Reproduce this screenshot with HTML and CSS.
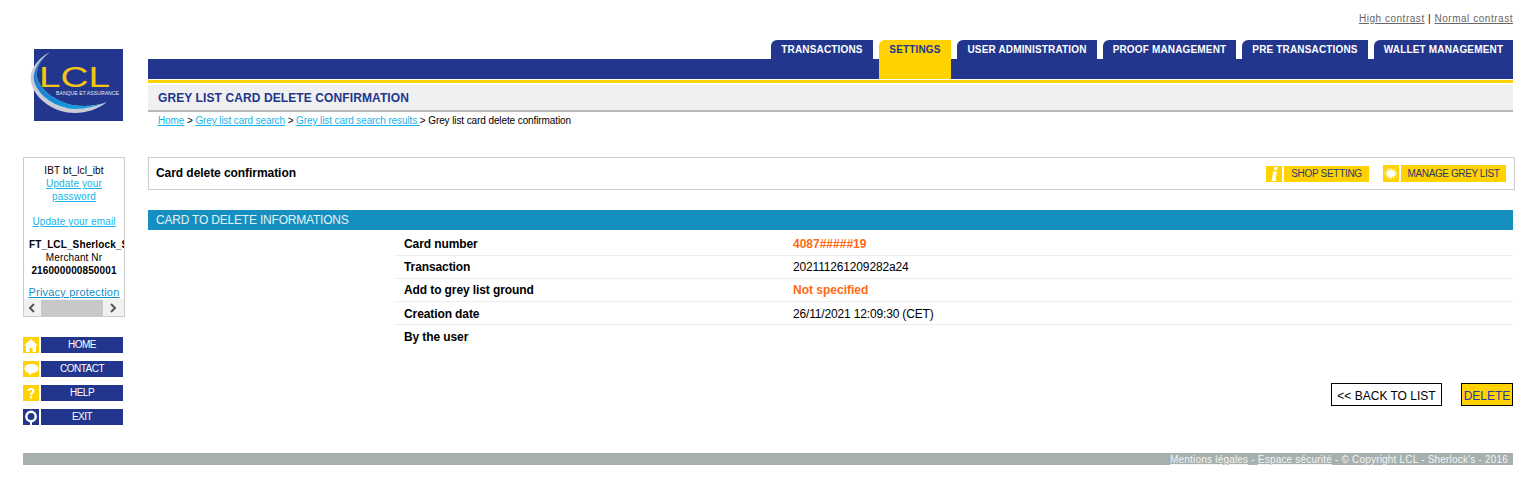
FILE: index.html
```html
<!DOCTYPE html>
<html lang="en">
<head>
<meta charset="utf-8">
<title>Grey list card delete confirmation</title>
<link rel="stylesheet" href="styles.css">
</head>
<body>
<div class="page">
  <div class="contrast"><a href="#">High contrast</a> <span class="sep">|</span> <a href="#">Normal contrast</a></div>
  <div class="layout">
    <aside class="side">
      <svg class="logo" width="98" height="76" viewBox="26 47 98 76">
        <defs>
          <linearGradient id="sw" x1="0" y1="0" x2="1" y2="1">
            <stop offset="0" stop-color="#3a6fc4"/><stop offset=".6" stop-color="#0f8fd8"/><stop offset="1" stop-color="#27a7e6"/>
          </linearGradient>
        </defs>
        <rect x="34" y="49" width="89" height="72" fill="#21368c"/>
        <path d="M50 52C38 58 29 70 31 82C35 100 55 113 75 113C87 113 98 109 107 102C97 106 84 107 72 105C55 101 40 90 37 77C36 68 40 60 50 52Z" fill="#c9ccd6"/>
        <path d="M50 52C40 59 32 70 34 81C38 96 56 108 75 109C86 109 97 106 107 102C97 106 84 107 72 105C55 101 40 90 37 77C36 68 40 60 50 52Z" fill="url(#sw)"/>
        <text class="logo-mark" x="39" y="87" textLength="71" lengthAdjust="spacingAndGlyphs">LCL</text>
        <text class="logo-sub" x="56" y="94.500" textLength="63" lengthAdjust="spacingAndGlyphs">BANQUE ET ASSURANCE</text>
      </svg>
      <div class="account">
        <div class="account-body">
          <p class="line">IBT bt_lcl_ibt</p>
          <p class="line"><a href="#">Update your<br>password</a></p>
          <p class="line email"><a href="#">Update your email</a></p>
          <p class="line merchant"><b>FT_LCL_Sherlock_Shop</b></p>
          <p class="line">Merchant Nr</p>
          <p class="line"><b>216000000850001</b></p>
          <p class="privacy"><a href="#">Privacy protection</a></p>
        </div>
        <div class="scrollbar">
          <svg class="arrow" width="8" height="10" viewBox="0 0 8 10"><path d="M6 1L2 5L6 9" fill="none" stroke="#555" stroke-width="2"/></svg>
          <span class="thumb"></span>
          <svg class="arrow" width="8" height="10" viewBox="0 0 8 10"><path d="M2 1L6 5L2 9" fill="none" stroke="#555" stroke-width="2"/></svg>
        </div>
      </div>
      <nav class="menu">
        <a class="menu-item" href="#">
          <span class="menu-icon"><svg width="16" height="16" viewBox="0 0 16 16"><path d="M8 2L15 8.500L13 8.500V15H9.500V11H6.500V15H3V8.500H1Z" fill="#fff"/></svg></span>
          <span class="menu-label">HOME</span>
        </a>
        <a class="menu-item" href="#">
          <span class="menu-icon"><svg width="16" height="16" viewBox="0 0 16 16"><path d="M8.500 3C12.500 3 15.500 4.800 15.500 7.500C15.500 10.200 12.500 12 9 12L6 15L6 12C3 11.500 1.500 9.800 1.500 7.500C1.500 4.800 4.500 3 8.500 3Z" fill="#fff"/></svg></span>
          <span class="menu-label">CONTACT</span>
        </a>
        <a class="menu-item" href="#">
          <span class="menu-icon"><svg width="16" height="16" viewBox="0 0 16 16"><path d="M4.500 6C4.500 4 6 3 8 3C10.200 3 11.500 4.200 11.500 5.900C11.500 8 9 8.200 9 10H7C7 7.500 9.200 7.200 9.200 5.900C9.200 5.200 8.700 4.900 8 4.900C7.200 4.900 6.800 5.300 6.800 6Z M7 11H9V13.500H7Z" fill="#fff"/></svg></span>
          <span class="menu-label">HELP</span>
        </a>
        <a class="menu-item" href="#">
          <span class="menu-icon exit"><svg width="16" height="16" viewBox="0 0 16 16"><circle cx="8" cy="7.500" r="4.700" fill="none" stroke="#fff" stroke-width="2.400"/><path d="M7 11H9V16H7Z" fill="#fff"/></svg></span>
          <span class="menu-label">EXIT</span>
        </a>
      </nav>
    </aside>
    <main class="main">
      <div class="tabs">
        <a class="tab" href="#">TRANSACTIONS</a>
        <a class="tab active" href="#">SETTINGS</a>
        <a class="tab" href="#">USER ADMINISTRATION</a>
        <a class="tab" href="#">PROOF MANAGEMENT</a>
        <a class="tab" href="#">PRE TRANSACTIONS</a>
        <a class="tab" href="#">WALLET MANAGEMENT</a>
      </div>
      <div class="rule"></div>
      <h1 class="page-title">GREY LIST CARD DELETE CONFIRMATION</h1>
      <div class="crumbs"><a href="#">Home</a> &gt; <a href="#">Grey list card search</a> &gt; <a href="#">Grey list card search results </a> &gt; Grey list card delete confirmation</div>
      <section class="card">
        <h2 class="card-title">Card delete confirmation</h2>
        <div class="actions">
          <a class="action" href="#">
            <span class="action-icon"><svg width="16" height="16" viewBox="0 0 16 16"><path d="M8.500 1H11.500L11 4H8Z M7.500 5.500H11L9.500 13.500H10.500L10 15H5.500L7 7H6.500Z" fill="#fff"/></svg></span>
            <span class="action-label shop">SHOP SETTING</span>
          </a>
          <a class="action manage" href="#">
            <span class="action-icon tall"><svg width="16" height="17" viewBox="0 0 16 17"><path d="M8 1.500L9 6L11.500 2.500L10.800 6.600L14.500 5L11.500 7.800L15.500 8.500L11.500 9.500L14.500 12L10.800 10.800L11.500 14.500L9 11.200L8 15.500L7 11.200L4.500 14.500L5.200 10.800L1.500 12L4.500 9.500L.5 8.500L4.500 7.800L1.500 5L5.200 6.600L4.500 2.500L7 6Z" fill="#fff"/></svg></span>
            <span class="action-label tall">MANAGE GREY LIST</span>
          </a>
        </div>
      </section>
      <h2 class="band">CARD TO DELETE INFORMATIONS</h2>
      <dl class="details">
        <div class="row"><dt>Card number</dt><dd class="alert">4087#####19</dd></div>
        <div class="row"><dt>Transaction</dt><dd>202111261209282a24</dd></div>
        <div class="row"><dt>Add to grey list ground</dt><dd class="alert">Not specified</dd></div>
        <div class="row low"><dt>Creation date</dt><dd>26/11/2021 12:09:30 (CET)</dd></div>
        <div class="row low last"><dt>By the user</dt><dd></dd></div>
      </dl>
      <div class="buttons">
        <a class="btn" href="#">&lt;&lt; BACK TO LIST</a>
        <a class="btn primary" href="#">DELETE</a>
      </div>
    </main>
  </div>
  <footer class="footer"><a href="#">Mentions légales</a> - <a href="#">Espace sécurité</a> - © Copyright LCL - Sherlock's - 2016</footer>
</div>
</body>
</html>
```
FILE: styles.css
```css
* { box-sizing: border-box; }
html, body { margin: 0; padding: 0; background: #fff; }
body { font-family: "Liberation Sans", Arial, sans-serif; font-size: 10px; color: #000; overflow: hidden; }
a { color: inherit; }
p, h1, h2, dl, dd { margin: 0; }

.page { width: 1536px; padding: 0 23px; }

.contrast { height: 40px; padding-top: 12px; text-align: right; font-size: 10px; line-height: 13px; letter-spacing: .53px; color: #666; }
.contrast .sep { color: #000; }

.layout { display: flex; }
.side { width: 102px; margin-right: 23px; flex: none; }
.main { width: 1365px; flex: none; }

.logo { display: block; margin: 7px 0 0 3px; }
.logo-mark { font-family: "Liberation Sans", Arial, sans-serif; font-size: 29px; fill: #f3c614; }
.logo-sub { font-family: "Liberation Sans", Arial, sans-serif; font-size: 5px; fill: #e4e8f5; }

.account { margin-top: 34px; height: 160px; border: 1px solid #ccc; display: flex; flex-direction: column; overflow: hidden; }
.account-body { flex: 1; padding-top: 6px; text-align: center; white-space: nowrap; overflow: hidden; }
.line { line-height: 13px; letter-spacing: .12px; }
.line a { color: #16b4ea; }
.email { margin-top: 12px; }
.merchant { margin-top: 10px; text-align: left; padding-left: 5px; }
.privacy { margin-top: 9px; font-size: 11px; line-height: 13px; letter-spacing: .2px; color: #1590c4; }
.scrollbar { height: 17px; flex: none; background: #f1f1f1; display: flex; align-items: center; }
.arrow { margin: 0 5px 0 4px; flex: none; }
.thumb { width: 62px; height: 16px; background: #c8c8c8; flex: none; margin-right: 2px; }

.menu { margin-top: 20px; display: flex; flex-direction: column; gap: 8px; }
.menu-item { display: flex; height: 16px; text-decoration: none; }
.menu-icon { width: 16px; height: 16px; background: #ffd200; flex: none; margin-right: 2px; }
.menu-icon svg { display: block; }
.menu-icon.exit { background: #21368c; }
.menu-label { width: 82px; background: #21368c; color: #fff; font-size: 10px; line-height: 16px; text-align: center; letter-spacing: -.5px; }

.tabs { height: 39px; display: flex; justify-content: flex-end; gap: 6px; background: linear-gradient(transparent 19px, #21368c 19px); }
.tab { height: 19px; padding-top: 4px; text-align: center; background: #21368c; color: #fff; border-top-left-radius: 6px; font-size: 10px; font-weight: bold; line-height: 12px; text-decoration: none; white-space: nowrap; letter-spacing: .16px; }
.tab:nth-child(1) { width: 102px; }
.tab:nth-child(2) { width: 72px; }
.tab:nth-child(3) { width: 140px; }
.tab:nth-child(4) { width: 133px; }
.tab:nth-child(5) { width: 126px; }
.tab:nth-child(6) { width: 139px; }
.tab.active { height: 39px; background: #ffd200; color: #21368c; }

.rule { height: 6px; border-top: 1px solid #fff; border-bottom: 2px solid #fff; background: #ffd200; }
.page-title { height: 27px; background: #f0f0f0; border-bottom: 2px solid #b8b8b8; padding-left: 10px; color: #21368c; font-size: 12px; font-weight: bold; line-height: 26px; letter-spacing: .1px; }

.crumbs { padding: 2px 0 0 10px; height: 45px; line-height: 13px; font-size: 10px; letter-spacing: -.1px; }
.crumbs a { color: #16b4ea; }

.card { width: 1367px; height: 33px; border: 1px solid #ccc; display: flex; align-items: center; justify-content: space-between; padding: 0 8px 0 7px; }
.card-title { font-size: 12px; font-weight: bold; line-height: 14px; margin-top: -2px; letter-spacing: -.06px; }
.actions { display: flex; align-items: center; gap: 14px; }
.action { display: flex; text-decoration: none; }
.action-icon { width: 16px; height: 16px; margin: 1px 2px 0 0; background: #ffd200; flex: none; }
.action-icon.tall { height: 17px; margin-top: 0; }
.action-icon svg { display: block; }
.action-label { height: 16px; margin-top: 1px; background: #ffd200; color: #2b3a6e; font-size: 10px; line-height: 16px; text-align: center; letter-spacing: -.3px; }
.action-label.shop { width: 85px; }
.action-label.tall { width: 105px; height: 17px; margin-top: 0; line-height: 18px; letter-spacing: -.4px; }

.band { margin: 20px 0 3px; height: 20px; background: #158fbf; color: #e4f1f7; font-size: 12px; font-weight: normal; line-height: 21px; padding-left: 8px; letter-spacing: -.2px; }

.details { margin-left: 246px; }
.row { display: flex; height: 23px; border-bottom: 1px solid #eee; font-size: 12px; line-height: 22px; padding-left: 10px; }
.row.low { line-height: 24px; }
.row.last { border-bottom: 0; }
.row dt { width: 389px; font-weight: bold; flex: none; letter-spacing: -.1px; }
.row dd { font-weight: normal; letter-spacing: -.16px; }
.row dd.alert { color: #ff6a13; font-weight: bold; letter-spacing: 0; }

.buttons { display: flex; justify-content: flex-end; gap: 19px; margin-top: 35px; height: 47px; }
.btn { height: 23px; border: 1px solid #000; font-size: 12px; line-height: 24px; text-align: center; text-decoration: none; color: #000; width: 111px; }
.btn.primary { width: 52px; background: #ffd200; color: #2a3aa8; }

.footer { margin-top: 23px; height: 12px; background: #a6b0ae; color: #f4f6f5; text-align: right; padding-right: 5px; font-size: 10px; line-height: 13px; letter-spacing: .2px; }
```
